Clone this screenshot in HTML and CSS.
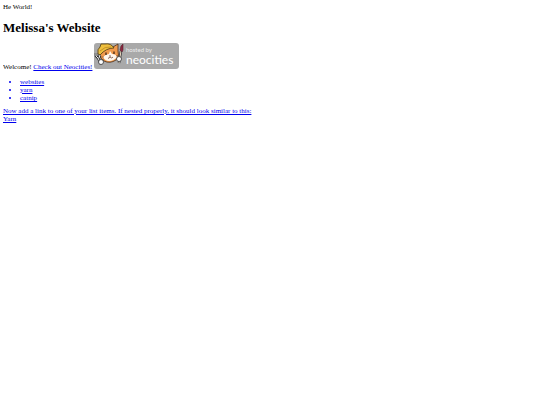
FILE: index.html
```
<!DOCTYPE html>
<html lang="en">
<head>
    <meta charset="UTF-8">
    <title>Melissa's Website</title>
    <link rel="stylesheet" href="styles.css">
</head>
<body>
    He World!
    <h1>Melissa's Website</h1>
    <div class="welcome">
        Welcome!
        <a href="https://neocities.org">Check out Neocities!</a>
        <svg class="banner" viewBox="0 0 85 26" role="img" aria-label="Hosted by Neocities">
            <rect x="0" y="0" width="85" height="26" rx="3" fill="#a9a9a9"/>
            <!-- cat head -->
            <path d="M6 9 L14 3 L19 4 L24 1 L24 8 Q26 13 22 17 Q16 21 10 18 Q5 15 6 9 Z" fill="#f09a4c" stroke="#4a2f1c" stroke-width=".8"/>
            <path d="M9 14 Q12 11 15 11 L16 8 L18 11 Q22 11 23 14 Q20 18 15 18 Q11 18 9 14 Z" fill="#fff6ec"/>
            <!-- yellow hat -->
            <path d="M4 11 Q3 6 6 4 L7 1 L11 1 Q17 0 20 5 Q12 5 6 12 Z" fill="#eebf3d" stroke="#4b3815" stroke-width=".8"/>
            <path d="M6 8 Q11 3 17 4" fill="none" stroke="#b98624" stroke-width=".8"/>
            <!-- eyes, nose and whiskers -->
            <path d="M12 9.500v2.500M20 8.500v2.500" stroke="#2e1c12" stroke-width="1.200"/>
            <path d="M15 13h2M14 15q1 1 2-1q2 2 3 0" fill="none" stroke="#5e3022" stroke-width=".7"/>
            <path d="M7 14l3 0M8 17l2-1M22 13l3-1" stroke="#5e3a20" stroke-width=".5"/>
            <!-- wrench and brush -->
            <path d="M2 10v3l2 2 3 6M6 12l-1 3" fill="none" stroke="#333" stroke-width="2.500"/>
            <path d="M2 10v3l2 2 3 6M6 12l-1 3" fill="none" stroke="#eee" stroke-width="1"/>
            <path d="M27 8l-2 12" stroke="#333" stroke-width="2.500"/>
            <path d="M27 8l-2 12" stroke="#f3dfc5" stroke-width="1"/>
            <path d="M26 7l1-4 2-2v6l-1 2z" fill="#8e2740" stroke="#54212e" stroke-width=".6"/>
            <circle cx="7" cy="19" r="2.500" fill="#fff" stroke="#333" stroke-width=".8"/>
            <circle cx="25" cy="16" r="2.500" fill="#fff" stroke="#333" stroke-width=".8"/>
            <text class="hosted" x="32" y="9">hosted by</text>
            <text class="neocities" x="32" y="21">neocities</text>
        </svg>
    </div>
    <a href="#yarn">
        <ul>
            <li>websites</li>
            <li>yarn</li>
            <li>catnip</li>
        </ul>
        Now add a link to one of your list items. If nested properly, it should look similar to this:
        <br>
        Yarn
    </a>
</body>
</html>
```
FILE: styles.css
```
body {
    margin: 3px;
    font-family: "Liberation Serif", "Times New Roman", serif;
    font-size: 7px;
    line-height: 8px;
    color: #000000;
    background-color: #ffffff;
}
h1 {
    margin: 9px 0 7px;
    font-size: 13px;
    line-height: 16px;
}
a {
    color: #0000ee;
}
ul {
    margin: 7px 0 5px;
    padding-left: 17px;
}
.banner {
    width: 85px;
    height: 26px;
}
.hosted {
    font-family: Lato, sans-serif;
    font-size: 6px;
    fill: #eeeeee;
}
.neocities {
    font-family: Lato, sans-serif;
    font-size: 12px;
    fill: #ffffff;
}
```
